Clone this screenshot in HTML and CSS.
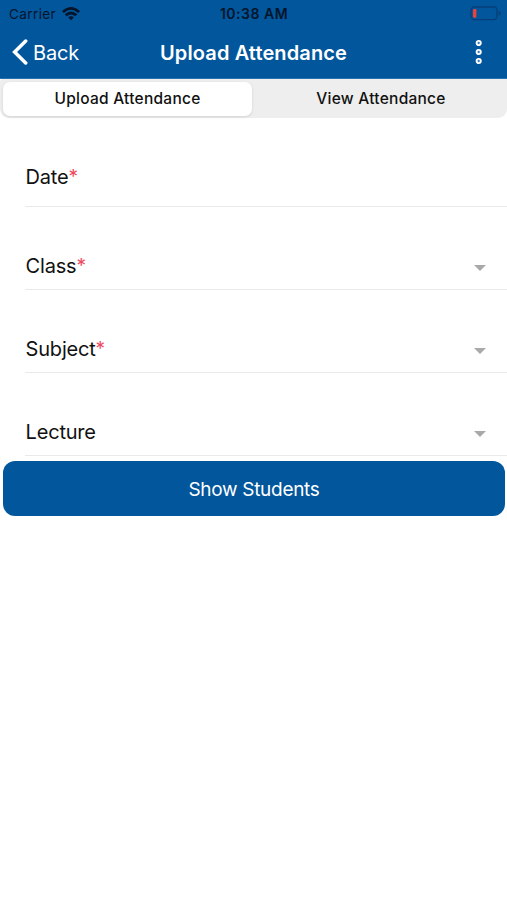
FILE: index.html
```html
<!DOCTYPE html>
<html lang="en">
<head>
<meta charset="utf-8">
<title>Upload Attendance</title>
<link rel="stylesheet" href="styles.css">
</head>
<body>
<header class="header">
  <div class="status">
    <div class="status-left">
      <span class="carrier">Carrier</span>
      <svg class="wifi" width="18" height="14" viewBox="0 0 18 14">
        <g fill="none" stroke="#04152b" stroke-width="2.8">
          <path d="M.9 5Q9-2.2 17.1 5"/>
          <path d="M3.7 8.3Q9 3.6 14.3 8.3"/>
        </g>
        <path d="M6.1 10.3Q9 8 11.9 10.3L9 13.2Z" fill="#04152b"/>
      </svg>
    </div>
    <span class="time">10:38 AM</span>
    <svg class="battery" width="31" height="15" viewBox="0 0 31 15">
      <rect x="1" y="1" width="26" height="12.6" rx="3.4" fill="none" stroke="#063f78" stroke-width="1.3"/>
      <path d="M28.6 5Q30.6 5.3 30.6 7.2T28.6 9.6Z" fill="#063f78"/>
      <rect x="3" y="3" width="3.4" height="8.8" rx="1.2" fill="#ef4136"/>
    </svg>
  </div>
  <nav class="nav">
    <a class="back">
      <svg class="chevron" width="16" height="26" viewBox="0 0 16 26"><path d="M13.7 2L2.6 13L13.7 24" fill="none" stroke="#fff" stroke-width="3.5" stroke-linecap="round"/></svg>
      <span class="back-label">Back</span>
    </a>
    <h1 class="title"><span>Upload Attendance</span></h1>
    <svg class="more" width="8" height="26" viewBox="0 0 8 26">
      <g fill="#3c78b5" stroke="#fff" stroke-width="1.9"><circle cx="3.7" cy="4" r="2.1"/><circle cx="3.7" cy="13" r="2.1"/><circle cx="3.7" cy="22" r="2.1"/></g>
    </svg>
  </nav>
</header>
<div class="tabs">
  <div class="tab active"><span>Upload Attendance</span></div>
  <div class="tab"><span>View Attendance</span></div>
</div>
<main class="form">
  <div class="field first"><span class="label">Date</span><span class="star">*</span></div>
  <div class="field"><span class="label">Class</span><span class="star">*</span><i class="caret"></i></div>
  <div class="field"><span class="label">Subject</span><span class="star">*</span><i class="caret"></i></div>
  <div class="field"><span class="label">Lecture</span><i class="caret"></i></div>
</main>
<button class="submit"><span>Show Students</span></button>
</body>
</html>
```
FILE: styles.css
```css
* { box-sizing: border-box; }
body {
  margin: 0;
  background: #fff;
  color: #111;
  font-family: Inter, "Liberation Sans", sans-serif;
}
svg { display: block; flex: none; }
.header {
  height: 79px;
  background: #02569c;
  border-bottom: 1px solid #2b70aa;
}
.status {
  display: grid;
  grid-template-columns: 1fr auto 1fr;
  align-items: center;
  height: 27px;
  padding: 0 6px 0 9px;
  color: #04152b;
}
.status-left { display: flex; align-items: center; gap: 6px; }
.carrier { font-size: 13.5px; letter-spacing: .4px; }
.time { margin: 0 1px 0 -1px; font-size: 14px; font-weight: 600; letter-spacing: .5px; }
.battery { justify-self: end; }
.nav {
  display: grid;
  grid-template-columns: 1fr auto 1fr;
  align-items: center;
  height: 51px;
  padding: 0 24px 0 12px;
}
.back { display: flex; align-items: center; gap: 5px; color: #fff; }
.chevron, .more { margin-bottom: 2px; }
.back-label { font-size: 20px; letter-spacing: -.15px; }
.title { margin: 0 0 0 12px; font-size: 20px; font-weight: 600; letter-spacing: .13px; color: #fff; white-space: nowrap; }
.more { justify-self: end; }
.tabs {
  display: flex;
  gap: 3px;
  height: 39px;
  padding: 3px 0 2px 3px;
  border-radius: 3px 0 9px 9px;
  background: #eee;
}
.tab {
  flex: 1;
  display: flex;
  align-items: center;
  justify-content: center;
  padding: 0 0 2px;
  font-size: 15.5px;
  font-weight: 500;
  letter-spacing: .25px;
}
.active { flex: 0 0 249px; border-radius: 7px; background: #fff; box-shadow: 0 1px 3px rgba(0, 0, 0, .12); }
.form { padding-left: 25px; }
.field {
  display: flex;
  align-items: flex-end;
  height: 83px;
  padding: 0 21px 10px 0;
  border-bottom: 1px solid #e9e9ea;
  font-size: 20px;
  line-height: 26px;
}
.first { height: 89px; padding-bottom: 16px; }
.label { margin-left: .6px; letter-spacing: -.2px; }
.star { color: #ee4860; font-size: 19px; }
.caret {
  margin: 0 0 8px auto;
  border: 6px solid transparent;
  border-top-color: #a9a9a9;
  border-bottom: 0;
}
.submit {
  display: flex;
  align-items: center;
  justify-content: center;
  width: 502px;
  height: 55px;
  margin: 5px 0 0 3px;
  padding: 1px 0 0;
  border: 0;
  border-radius: 12px;
  background: #02569c;
  color: #fff;
  font: 400 19px Inter, "Liberation Sans", sans-serif;
  letter-spacing: -.3px;
}
```
